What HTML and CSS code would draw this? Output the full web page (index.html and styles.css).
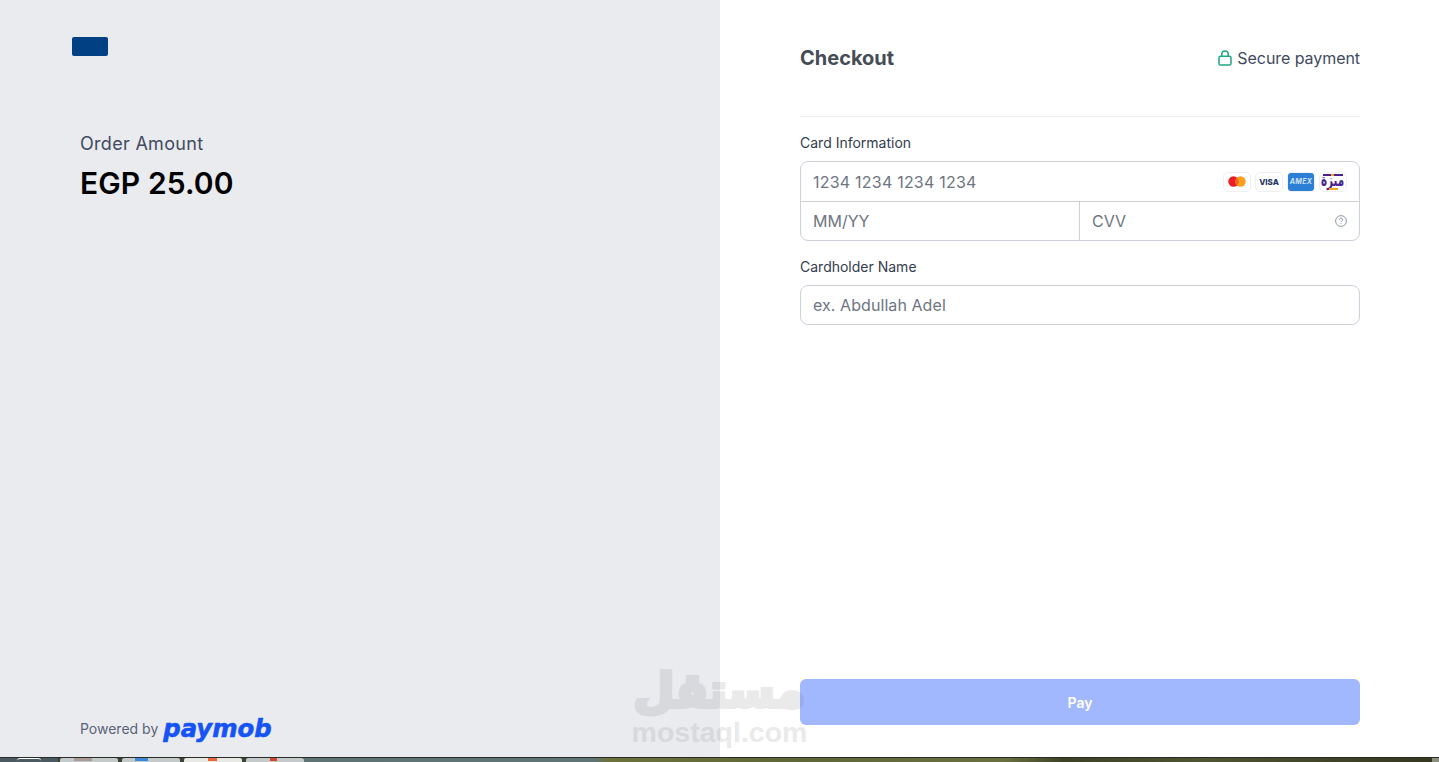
FILE: index.html
```html
<!DOCTYPE html>
<html lang="en">
<head>
    <meta charset="UTF-8">
    <meta name="viewport" content="width=device-width, initial-scale=1.0">
    <title>Checkout</title>
    <link rel="stylesheet" href="styles.css">
</head>
<body>
    <div class="page">
        <!-- Order summary -->
        <section class="summary">
            <div class="merchant-logo"></div>
            <p class="order-label">Order Amount</p>
            <p class="order-amount">EGP 25.00</p>
            <div class="powered">
                <span>Powered by</span>
                <span class="paymob">paymob</span>
            </div>
        </section>

        <!-- Checkout form -->
        <section class="checkout">
            <header class="checkout-head">
                <h1>Checkout</h1>
                <div class="secure">
                    <svg width="14" height="16" viewBox="0 0 14 16" fill="none" stroke="#1fa684" stroke-width="1.5">
                        <rect x="1" y="6.2" width="12" height="8.8" rx="1.6"/>
                        <path d="M3.8 6.2V4.2a3.2 3.2 0 0 1 6.4 0v2"/>
                    </svg>
                    <span>Secure payment</span>
                </div>
            </header>

            <label class="field-label card-label">Card Information</label>
            <div class="card-box">
                <div class="card-row">
                    <span class="placeholder card-number">1234 1234 1234 1234</span>
                    <div class="brands">
                        <span class="brand">
                            <svg width="18" height="11" viewBox="0 0 18 11">
                                <circle cx="5.5" cy="5.5" r="5.2" fill="#eb1c26"/>
                                <circle cx="12.5" cy="5.5" r="5.2" fill="#f99f1b"/>
                                <path d="M9 1.6a5.2 5.2 0 0 1 0 7.8 5.2 5.2 0 0 1 0-7.8z" fill="#f26522"/>
                            </svg>
                        </span>
                        <span class="brand visa">VISA</span>
                        <span class="brand amex"><span class="amex-plate">AMEX</span></span>
                        <span class="brand meeza"><span class="meeza-word" lang="ar" dir="rtl">ميزة</span></span>
                    </div>
                </div>
                <div class="card-row split">
                    <div class="card-cell expiry"><span class="placeholder">MM/YY</span></div>
                    <div class="card-cell cvv">
                        <span class="placeholder">CVV</span>
                        <svg width="12" height="12" viewBox="0 0 12 12" fill="none" stroke="#8d9aa3" stroke-width="1">
                            <circle cx="6" cy="6" r="5.4"/>
                            <path d="M4.4 4.7a1.6 1.6 0 1 1 2.4 1.4c-.5.3-.8.6-.8 1.1"/>
                            <path d="M6 8.3v.9"/>
                        </svg>
                    </div>
                </div>
            </div>

            <label class="field-label name-label">Cardholder Name</label>
            <div class="name-box"><span class="placeholder holder-name">ex. Abdullah Adel</span></div>

            <button class="pay-button">Pay</button>
        </section>

        <!-- Site watermark over the screenshot -->
        <div class="watermark">
            <span class="watermark-ar" lang="ar" dir="rtl">مستقل</span>
            <span class="watermark-en">mostaql.com</span>
        </div>
    </div>

    <!-- Strip of the desktop taskbar -->
    <div class="taskbar">
        <div class="task-start"><span class="start-orb"></span></div>
        <div class="task-tab"><span class="task-spot brown"></span></div>
        <div class="task-tab"><span class="task-spot blue"></span></div>
        <div class="task-tab light"><span class="task-spot orange"></span></div>
        <div class="task-tab"><span class="task-spot red"></span></div>
        <div class="task-rest"></div>
        <div class="task-end"></div>
    </div>
</body>
</html>
```

FILE: styles.css
```css
html, body {
    height: 100%;
}

body {
    font-family: 'Inter', 'Liberation Sans', sans-serif;
    margin: 0;
    display: flex;
    flex-direction: column;
    height: 762px;
    overflow: hidden;
    background-color: #ffffff;
}

.page {
    position: relative;
    flex: 1;
    display: flex;
    min-height: 0;
}

/* Left pane */
.summary {
    width: 720px;
    box-sizing: border-box;
    background-color: #eaebef;
    padding: 37px 0 0 80px;
    display: flex;
    flex-direction: column;
}

.merchant-logo {
    width: 36px;
    height: 19px;
    margin-left: -8px;
    background-color: #014083;
    border-radius: 2px;
}

.order-label {
    margin: 78px 0 0;
    font-size: 18px;
    letter-spacing: 0.3px;
    line-height: 20px;
    color: #414a60;
}

.order-amount {
    margin: 9px 0 0;
    font-size: 30px;
    letter-spacing: 0.1px;
    line-height: 40px;
    font-weight: 600;
    color: #000000;
}

.powered {
    margin-top: auto;
    margin-bottom: 13px;
    display: flex;
    align-items: center;
    gap: 5px;
    font-size: 14px;
    color: #5a6478;
}

.paymob {
    font-family: 'DejaVu Sans', sans-serif;
    font-size: 24.3px;
    line-height: 30px;
    font-weight: 700;
    font-style: italic;
    color: #1553f5;
    -webkit-text-stroke: 0.6px #1553f5;
    margin-top: 2px;
}

/* Right pane */
.checkout {
    flex: 1;
    padding: 0 79px 32px 80px;
    display: flex;
    flex-direction: column;
}

.checkout-head {
    height: 117px;
    box-sizing: border-box;
    padding-top: 44px;
    display: flex;
    justify-content: space-between;
    align-items: flex-start;
    border-bottom: 1px solid #eceef1;
}

.checkout-head h1 {
    margin: 0;
    font-size: 20px;
    line-height: 28px;
    font-weight: 700;
    color: #464c55;
}

.secure {
    display: flex;
    align-items: center;
    gap: 5px;
    height: 28px;
    font-size: 16px;
    letter-spacing: -0.06px;
    color: #414a60;
}

.field-label {
    display: block;
    font-size: 14px;
    line-height: 18px;
    color: #343c4d;
}

.card-label {
    margin-top: 17px;
    margin-bottom: 9px;
}

.card-box {
    height: 80px;
    box-sizing: border-box;
    border: 1px solid #cdd0d9;
    border-radius: 8px;
    display: flex;
    flex-direction: column;
}

.card-row {
    height: 40px;
    box-sizing: border-box;
    padding: 0 12px;
    display: flex;
    align-items: center;
    justify-content: space-between;
    border-bottom: 1px solid #cdd0d9;
}

.card-row.split {
    flex: 1;
    padding: 0;
    border-bottom: none;
}

.card-cell {
    height: 100%;
    box-sizing: border-box;
    padding: 0 12px;
    display: flex;
    align-items: center;
    justify-content: space-between;
}

.expiry {
    flex: 0 0 279px;
    border-right: 1px solid #cdd0d9;
}

.cvv {
    flex: 1;
}

.placeholder {
    font-size: 16px;
    color: #6e7580;
}

.card-number {
    letter-spacing: 0.22px;
}

.holder-name {
    letter-spacing: 0.07px;
}

.brands {
    display: flex;
    gap: 4px;
    align-items: center;
}

.brand {
    width: 28px;
    height: 20px;
    box-sizing: border-box;
    border: 1px solid #eeeff2;
    border-radius: 5px;
    background-color: #ffffff;
    display: flex;
    align-items: center;
    justify-content: center;
}

.visa {
    font-size: 8px;
    font-weight: 800;
    color: #1f3566;
}

.amex-plate {
    width: 26px;
    height: 18px;
    border-radius: 3px;
    background-color: #2b7fd4;
    display: flex;
    align-items: center;
    justify-content: center;
    font-size: 7px;
    letter-spacing: 0.3px;
    font-weight: 700;
    font-style: italic;
    color: #cfe2f7;
}

.meeza {
    position: relative;
}

/* top and bottom strips of the Meeza mark */
.meeza::before {
    content: "";
    position: absolute;
    left: 3px;
    right: 3px;
    top: 1px;
    height: 2px;
    background: linear-gradient(90deg, #4b1f8f 0 40%, #f5a623 40% 55%, #4b1f8f 55%);
}

.meeza::after {
    content: "";
    position: absolute;
    left: 9px;
    right: 8px;
    bottom: 1px;
    height: 2px;
    background-color: #f5a623;
}

.meeza-word {
    font-family: 'DejaVu Sans', sans-serif;
    font-size: 13px;
    line-height: 16px;
    font-weight: 700;
    color: #4b1f8f;
    transform: translateY(-1px) scale(0.8, 1.35);
}

.name-label {
    margin-top: 17px;
    margin-bottom: 9px;
}

.name-box {
    height: 40px;
    box-sizing: border-box;
    padding: 0 12px;
    border: 1px solid #cdd0d9;
    border-radius: 8px;
    display: flex;
    align-items: center;
}

.pay-button {
    margin-top: auto;
    height: 46px;
    border: none;
    border-radius: 6px;
    background-color: #a1b7fe;
    color: #ffffff;
    font-family: inherit;
    font-size: 14px;
    font-weight: 600;
}

/* Watermark */
.watermark {
    position: absolute;
    left: 632px;
    top: 664px;
    width: 175px;
    display: flex;
    flex-direction: column;
    align-items: center;
    color: #6f6f6f;
    opacity: 0.14;
    pointer-events: none;
}

.watermark-ar {
    font-family: 'DejaVu Sans', sans-serif;
    font-size: 47px;
    line-height: 53px;
    font-weight: 700;
    -webkit-text-stroke: 4px #6f6f6f;
}

.watermark-en {
    font-family: 'Liberation Sans', sans-serif;
    font-size: 28.5px;
    line-height: 30px;
    font-weight: 700;
}

/* Taskbar */
.taskbar {
    height: 5px;
    display: flex;
    gap: 4px;
    background-color: #3a4436;
    border-top: 1px solid #2a2a26;
    box-sizing: border-box;
}

.task-start {
    width: 58px;
    margin-right: -2px;
    background-color: #4a5a60;
    display: flex;
    justify-content: center;
}

.start-orb {
    width: 24px;
    height: 3px;
    box-sizing: border-box;
    border-top: 1px solid #ffffff;
    border-radius: 12px 12px 0 0;
}

.task-tab {
    width: 58px;
    display: flex;
    background-color: #c4c9c9;
    border-radius: 2px 2px 0 0;
}

.task-tab.light {
    background-color: #e8e8e4;
}

.task-spot {
    height: 3px;
}

.task-spot.brown {
    width: 18px;
    margin-left: 14px;
    background-color: #a89a94;
}

.task-spot.blue {
    width: 13px;
    margin-left: 13px;
    background-color: #3b87d8;
}

.task-spot.orange {
    width: 9px;
    margin-left: 24px;
    background-color: #e8683a;
}

.task-spot.red {
    width: 7px;
    margin-left: 24px;
    background-color: #d8442e;
}

.task-rest {
    flex: 1;
    margin: 0 -4px 0 -4px;
    background: linear-gradient(90deg, #5e7474 0, #5f7575 290px, #6c723a 305px, #5f6638 500px, #6a7040 700px, #3d4226 760px, #4f5432 900px, #35371f 1130px);
}

.task-end {
    width: 7px;
    background-color: #8a8f80;
}
```
